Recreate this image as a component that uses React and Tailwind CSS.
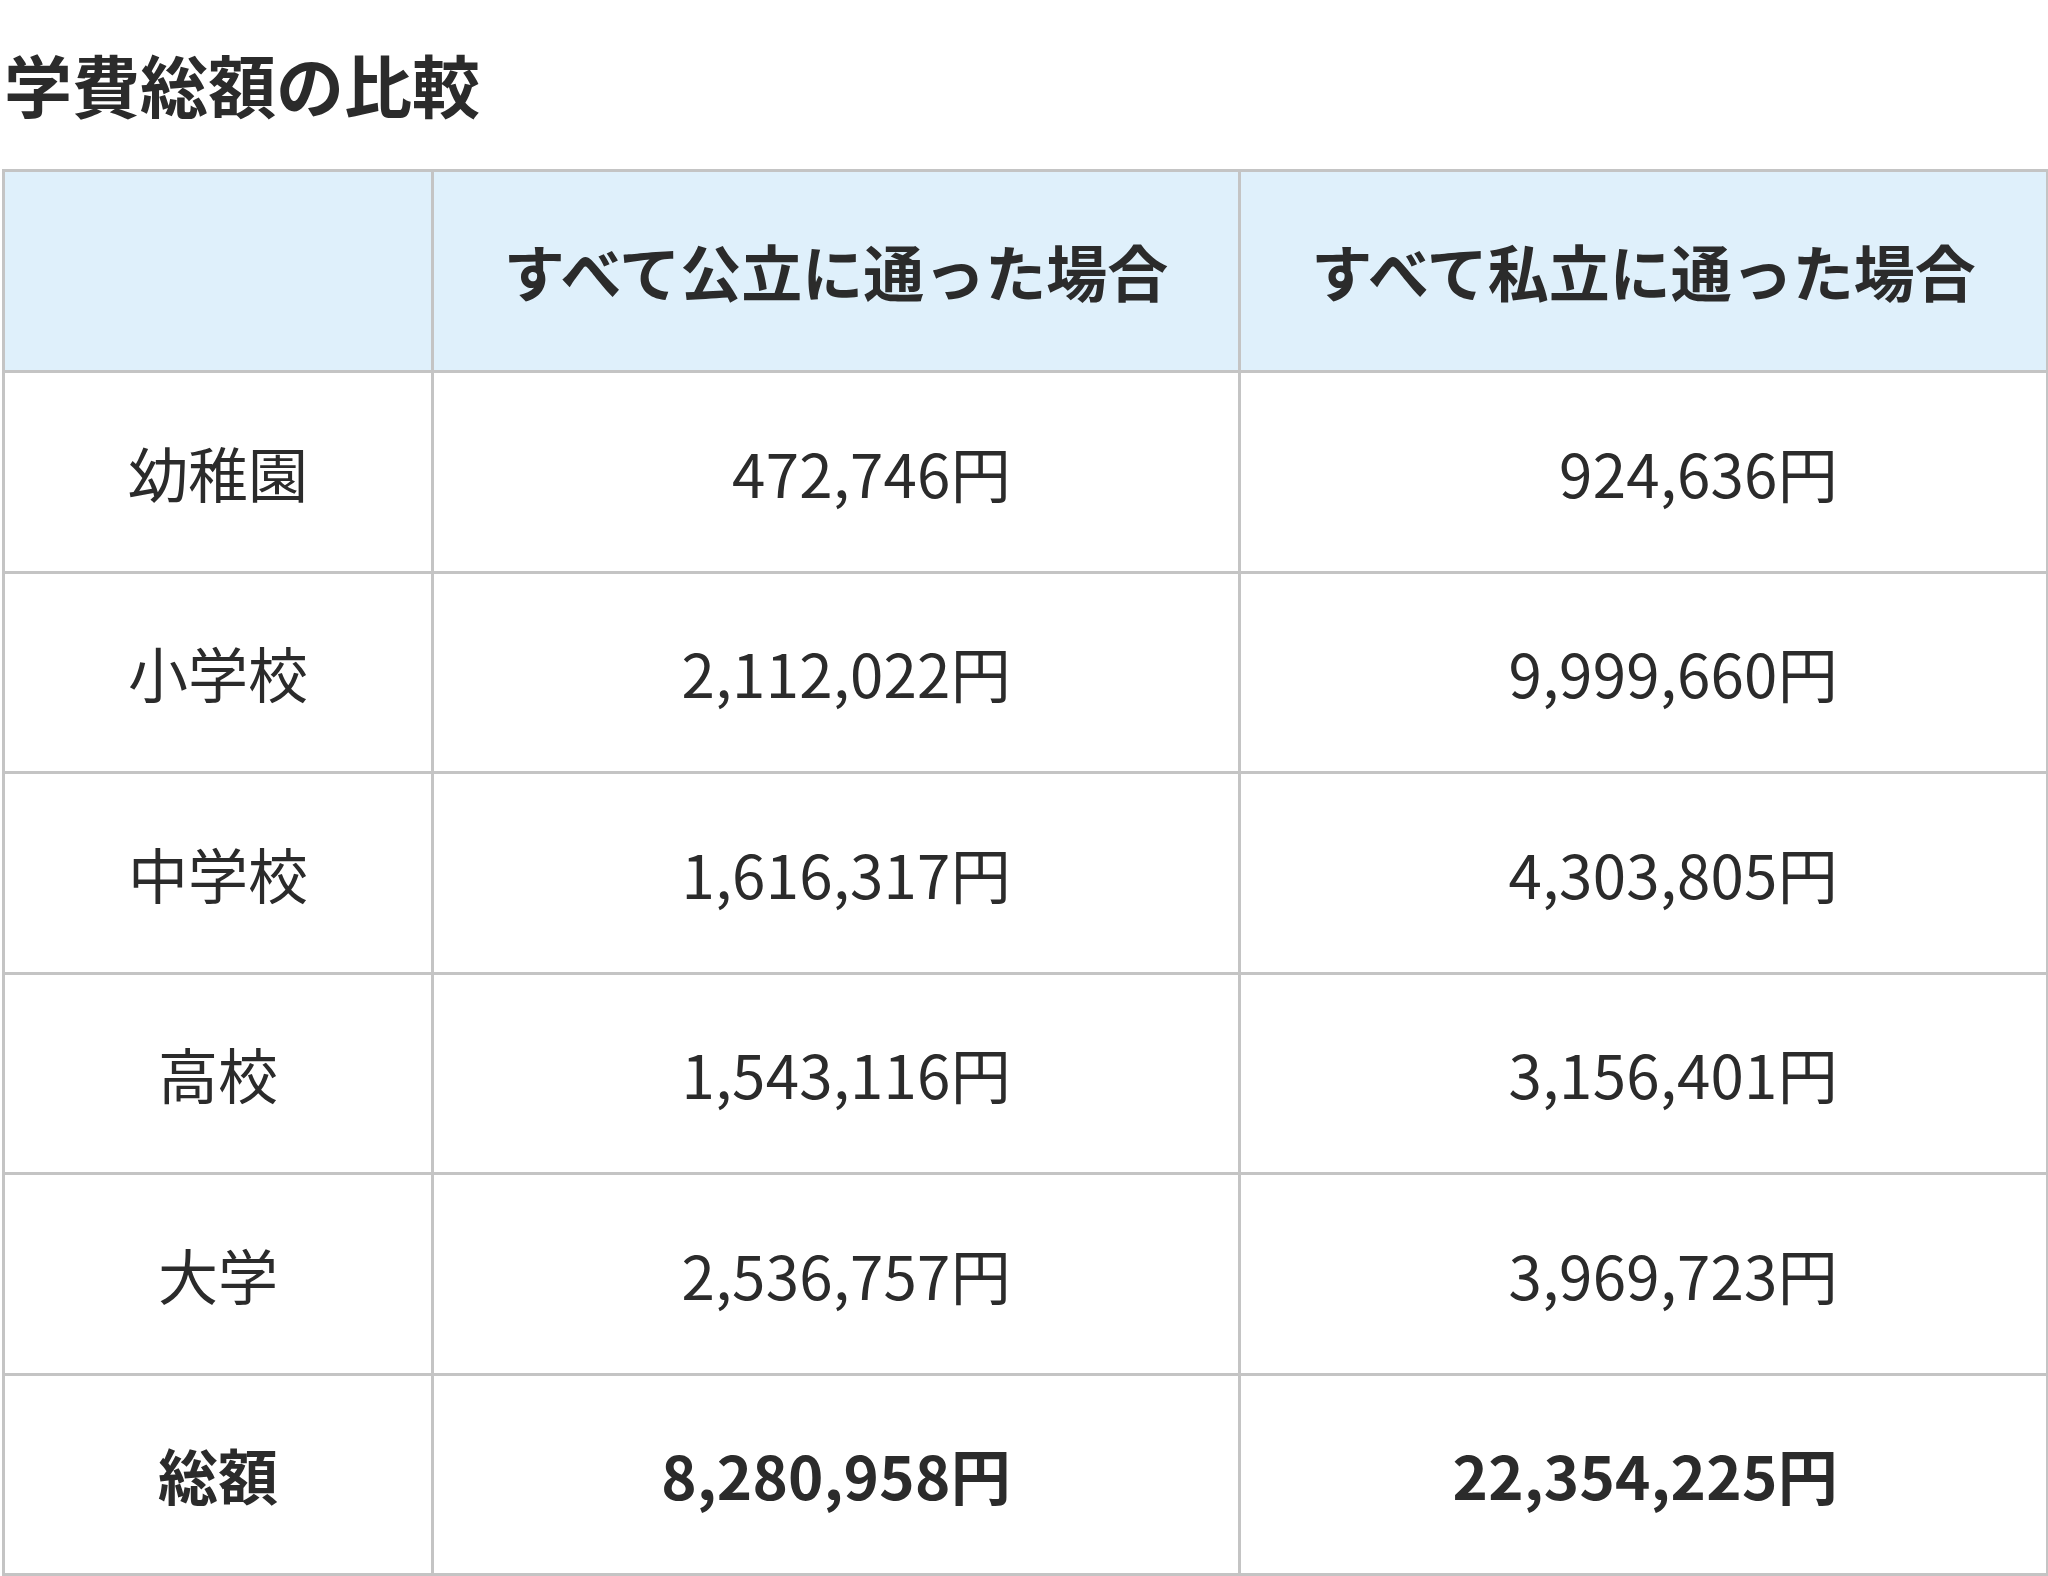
const rows = [
  { label: "幼稚園", pub: "472,746円", priv: "924,636円" },
  { label: "小学校", pub: "2,112,022円", priv: "9,999,660円" },
  { label: "中学校", pub: "1,616,317円", priv: "4,303,805円" },
  { label: "高校", pub: "1,543,116円", priv: "3,156,401円" },
  { label: "大学", pub: "2,536,757円", priv: "3,969,723円" },
];

export default function App() {
  return (
    <div
      className="w-[2048px] min-h-[1576px] bg-white text-[#2b2b2b]"
      style={{ fontFamily: '"Noto Sans CJK JP", "Noto Sans", sans-serif' }}
    >
      <h1 className="pt-[50px] pl-[4px] mb-[51px] text-[68px] leading-none font-bold">
        学費総額の比較
      </h1>

      <table className="ml-[2px] w-[2044px] table-fixed border-collapse border-[3px] border-[#c4c4c4] text-[60px]">
        <colgroup>
          <col className="w-[429px]" />
          <col className="w-[807px]" />
          <col className="w-[808px]" />
        </colgroup>
        <thead>
          <tr className="h-[201px] bg-[#dff0fb]">
            <th className="border-[3px] border-[#c4c4c4]"></th>
            <th className="border-[3px] border-[#c4c4c4] text-center text-[61px] font-bold">
              すべて公立に通った場合
            </th>
            <th className="border-[3px] border-[#c4c4c4] text-center text-[61px] font-bold">
              すべて私立に通った場合
            </th>
          </tr>
        </thead>
        <tbody>
          {rows.map((r) => (
            <tr key={r.label} className="h-[200.5px]">
              <td className="border-[3px] border-[#c4c4c4] text-center">{r.label}</td>
              <td className="border-[3px] border-[#c4c4c4] text-right pr-[227px] tracking-[0.3px]">{r.pub}</td>
              <td className="border-[3px] border-[#c4c4c4] text-right pr-[208px] tracking-[0.3px]">{r.priv}</td>
            </tr>
          ))}
          <tr className="h-[200.5px] font-bold">
            <td className="border-[3px] border-[#c4c4c4] text-center">総額</td>
            <td className="border-[3px] border-[#c4c4c4] text-right pr-[227px] tracking-[0.3px]">8,280,958円</td>
            <td className="border-[3px] border-[#c4c4c4] text-right pr-[208px] tracking-[0.3px]">22,354,225円</td>
          </tr>
        </tbody>
      </table>
    </div>
  );
}
